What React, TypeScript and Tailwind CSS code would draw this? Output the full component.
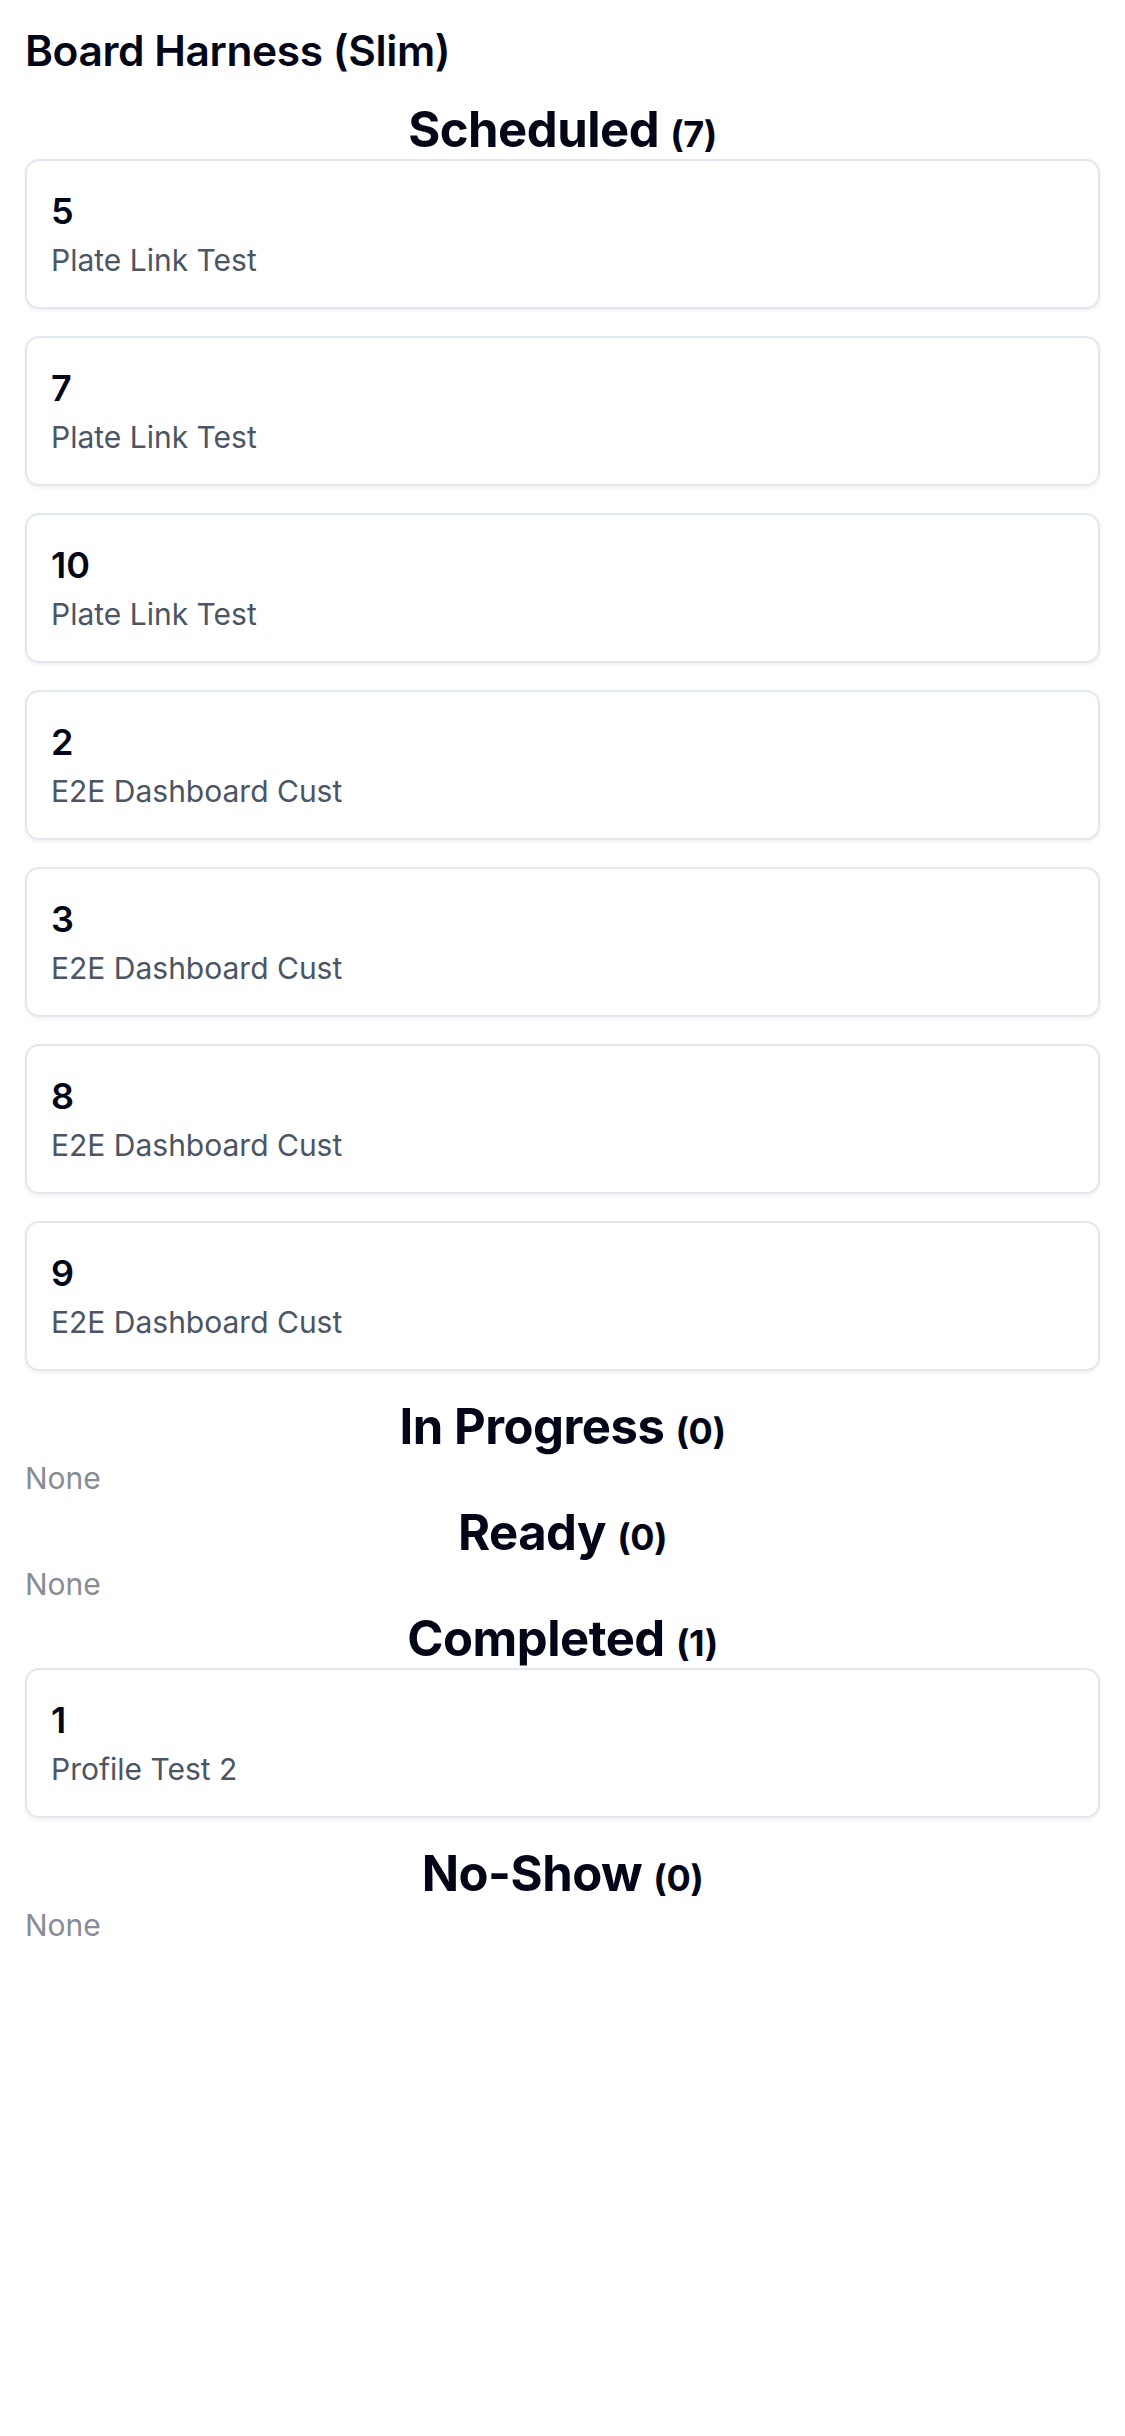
import React from "react";

type Item = { id: number; name: string };

const sections: { title: string; items: Item[] }[] = [
  {
    title: "Scheduled",
    items: [
      { id: 5, name: "Plate Link Test" },
      { id: 7, name: "Plate Link Test" },
      { id: 10, name: "Plate Link Test" },
      { id: 2, name: "E2E Dashboard Cust" },
      { id: 3, name: "E2E Dashboard Cust" },
      { id: 8, name: "E2E Dashboard Cust" },
      { id: 9, name: "E2E Dashboard Cust" },
    ],
  },
  { title: "In Progress", items: [] },
  { title: "Ready", items: [] },
  { title: "Completed", items: [{ id: 1, name: "Profile Test 2" }] },
  { title: "No-Show", items: [] },
];

function Card({ item }: { item: Item }) {
  return (
    <div className="mb-[27px] rounded-[14px] border-2 border-[#e2e8f0] bg-white px-6 pt-[25px] pb-6 shadow-[0_2px_4px_rgba(15,23,42,0.06)]">
      <div className="text-[36px] font-semibold leading-[50px] text-[#020617]">{item.id}</div>
      <div className="mt-[2px] text-[30px] leading-[45px] text-[#4b5563]">{item.name}</div>
    </div>
  );
}

export default function App() {
  return (
    <main className="min-h-screen bg-white px-[25px] pt-[29px] pb-10 font-['Inter',sans-serif] text-[#020617]">
      <h1 className="text-[42.5px] font-semibold leading-[44px] tracking-[-0.01em]">Board Harness (Slim)</h1>
      <div className="mt-[28px] flex flex-col">
        {sections.map((s) => (
          <section key={s.title}>
            <h2 className="text-center text-[49px] font-bold leading-[58px] tracking-[-0.01em]">
              {s.title} <span className="text-[36px] leading-none">({s.items.length})</span>
            </h2>
            {s.items.length === 0 ? (
              <p className="mb-1 text-[30px] leading-[44px] text-[#878c96]">None</p>
            ) : (
              <div className="flex flex-col">
                {s.items.map((it) => (
                  <Card key={it.id} item={it} />
                ))}
              </div>
            )}
          </section>
        ))}
      </div>
    </main>
  );
}
